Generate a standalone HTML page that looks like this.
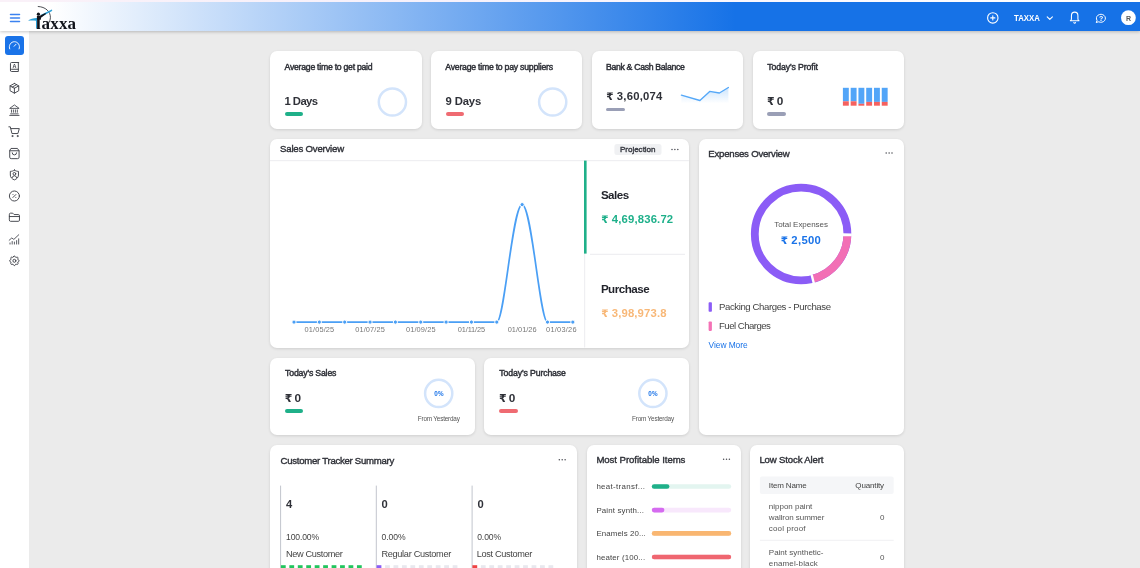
<!DOCTYPE html>
<html lang="en">
<head>
<meta charset="utf-8">
<title>Taxxa Dashboard</title>
<style>
*{box-sizing:border-box;margin:0;padding:0}
html,body{width:1140px;height:568px;overflow:hidden}
body{background:#ebebeb;font-family:"Liberation Sans",sans-serif;color:#2f3138;position:relative}
#topline{position:absolute;left:0;top:0;width:1140px;height:1.500px;background:linear-gradient(90deg,#faf1f8 0%,#f6f1fb 40%,#ffffff 100%);z-index:5}
#header{position:absolute;left:0;top:0;width:1140px;height:31px;background:linear-gradient(90deg,#ffffff 0%,#ffffff 4.500%,#1672e7 64.500%,#1672e7 100%);box-shadow:0 1px 3px rgba(0,0,0,.22);z-index:4}
#sidebar{position:absolute;left:0;top:31px;width:28.5px;height:537px;background:#fff;z-index:3}
#sidebar .act{position:absolute;left:5px;top:5px;width:18.6px;height:18.6px;border-radius:3px;background:#1a73e8}
.ic{position:absolute;left:8px;width:13px;height:13px;fill:none;stroke:#3d3f47;stroke-width:1.7;stroke-linecap:round;stroke-linejoin:round;overflow:visible}
.ic.w{stroke:#fff}
.card{position:absolute;background:#fff;border-radius:7px;box-shadow:0 1px 3px rgba(0,0,0,.12)}
#txt{position:absolute;left:0;top:0;width:1140px;height:568px;z-index:6;will-change:transform}
.t{position:absolute;white-space:nowrap;line-height:1;z-index:6}
.t.b{font-weight:700}
.t.m{font-weight:400;-webkit-text-stroke:.380px currentColor}
.t.n{font-weight:400}
.t.s{font-weight:400;-webkit-text-stroke:.450px currentColor}
.rs{font-family:"DejaVu Sans",sans-serif;font-size:.92em;letter-spacing:0}
.pill{position:absolute;height:3.8px;border-radius:2px;width:18.8px}
.ov{position:absolute;left:0;top:0;width:1140px;height:568px;z-index:5;pointer-events:none;will-change:transform}
#logo{position:absolute;left:0;top:0;z-index:6;will-change:transform}
#logo .lt{display:inline-block;clip-path:inset(0 3.900px 0 3.700px);margin-right:-2.700px}
#logo .w{position:absolute;left:32.800px;top:14.800px;font-family:"Liberation Serif",serif;font-weight:700;font-size:17px;line-height:1;color:#10131a;white-space:nowrap;letter-spacing:.15px}
</style>
</head>
<body>
<div id="header"></div>
<div id="topline"></div>
<div id="logo"><span class="w"><span class="lt">T</span>axxa</span></div>
<svg class="ov" style="z-index:7" width="1140" height="568" viewBox="0 0 1140 568">
<path d="M28 20.700c2.300-1.900 5.800-2.900 9-2.800v10.400h-1v-7.600c-2.900-.500-5.500-.300-8 0z" fill="#2b9fd6"/>
<path d="M38.200 6.500c7.200.300 12.400 5 12.200 11.200-.100 1.700-.500 3.200-1.200 4.600" fill="none" stroke="#22252b" stroke-width=".800" stroke-linecap="round"/>
<path d="M41 14.700l10.800-5.100.500.600-.700 1.100-9.800 5.200z" fill="#2b9fd6"/>
<circle cx="38.400" cy="14.200" r="1.600" fill="#10131a"/>
<path d="M36.900 16.100l2.900-.300 5.600-2.700.600 1-5 3.600-.200 2h-3.900z" fill="#10131a"/>
</svg>
<div id="sidebar"><div class="act"></div></div>

<!-- row 1 -->
<div class="card" style="left:270px;top:51px;width:152px;height:78px"></div>
<div class="card" style="left:431px;top:51px;width:151px;height:78px"></div>
<div class="card" style="left:592px;top:51px;width:151px;height:78px"></div>
<div class="card" style="left:753px;top:51px;width:150.600px;height:78px"></div>
<div class="pill" style="left:284.6px;top:112.3px;background:#1fb089;z-index:6"></div>
<div class="pill" style="left:445.6px;top:112.3px;background:#ef6b72;z-index:6"></div>
<div class="pill" style="left:606.2px;top:107.5px;background:#9a9fb6;z-index:6"></div>
<div class="pill" style="left:766.9px;top:112.3px;background:#9a9fb6;z-index:6"></div>

<!-- sales overview -->
<div class="card" style="left:270px;top:139px;width:418.900px;height:208.800px"></div>
<!-- expenses -->
<div class="card" style="left:699px;top:139px;width:204.5px;height:295.5px"></div>
<!-- today's -->
<div class="card" style="left:270px;top:357.5px;width:204.5px;height:77px"></div>
<div class="card" style="left:484px;top:357.5px;width:205px;height:77px"></div>
<div class="pill" style="left:284.7px;top:408.9px;background:#1fb089;z-index:6"></div>
<div class="pill" style="left:498.9px;top:408.9px;background:#ef6b72;z-index:6"></div>
<!-- bottom row -->
<div class="card" style="left:270px;top:445px;width:307px;height:140px"></div>
<div class="card" style="left:587px;top:445px;width:153.8px;height:140px"></div>
<div class="card" style="left:750px;top:445px;width:153.6px;height:140px"></div>

<svg class="ov" width="1140" height="568" viewBox="0 0 1140 568">
<g stroke="#3b82f0" stroke-width="1.5" stroke-linecap="round"><path d="M10.5 14.6h9M10.5 18h9M10.5 21.4h9"/></g>
<g fill="none" stroke="#fff" stroke-width="1.1" stroke-linecap="round"><circle cx="992.8" cy="17.900" r="5.200"/><path d="M990.700 17.900h4.200M992.800 15.800v4.200"/></g>
<path d="M1047.200 16.800l2.600 2.600 2.600-2.600" fill="none" stroke="#fff" stroke-width="1.100" stroke-linecap="round" stroke-linejoin="round"/>
<g transform="translate(1068.200 11.400) scale(.540)" fill="none" stroke="#fff" stroke-width="2" stroke-linecap="round" stroke-linejoin="round"><path d="M6 8a6 6.700 0 0 1 12 0v6a4 4 0 0 0 2 3.200h-16a4 4 0 0 0 2-3.200z"/><path d="M10.500 20.700a1.600 1.600 0 0 0 3 0"/></g>
<g transform="translate(1094.900 12.300) scale(.5)" fill="none" stroke="#fff" stroke-width="2" stroke-linecap="round" stroke-linejoin="round"><path d="M3 20l1.300-3.900c-2.324-3.437-1.426-7.872 2.100-10.374c3.526-2.501 8.590-2.296 11.845.480c3.255 2.777 3.695 7.266 1.029 10.501c-2.666 3.235-7.615 4.215-11.574 2.293l-4.700 1"/></g>
<text x="1101.200" y="20.900" font-family="Liberation Sans, sans-serif" font-size="7" font-weight="700" fill="#fff" text-anchor="middle">?</text>
<circle cx="1128.400" cy="17.700" r="7.400" fill="#fff"/>
<g transform="translate(7.40 38.70) scale(0.5833)" fill="none" stroke="#fff" stroke-width="1.600" stroke-linecap="round" stroke-linejoin="round"><path d="M3.960 17.500a8.800 8.800 0 1 1 16.080 0"/><path d="M11.500 13l3.200-3.400"/></g>
<g transform="translate(7.65 60.25) scale(0.5625)" fill="none" stroke="#3d3f47" stroke-width="1.659" stroke-linecap="round" stroke-linejoin="round"><path d="M19 4v16h-12a2 2 0 0 1-2-2v-12a2 2 0 0 1 2-2h12z"/><path d="M19 16h-12a2 2 0 0 0-2 2"/></g>
<text x="14.500" y="67.5" font-family="Liberation Sans, sans-serif" font-size="5.400" font-weight="700" fill="#3d3f47" text-anchor="middle">A</text>
<g transform="translate(7.90 81.80) scale(0.5417)" fill="none" stroke="#3d3f47" stroke-width="1.723" stroke-linecap="round" stroke-linejoin="round"><path d="M12 3l8 4.500v9l-8 4.500l-8-4.500v-9l8-4.500"/><path d="M12 12l8-4.500"/><path d="M12 12v9"/><path d="M12 12l-8-4.500"/><path d="M16 5.250l-8 4.500"/></g>
<g transform="translate(7.40 103.20) scale(0.5833)" fill="none" stroke="#3d3f47" stroke-width="1.450" stroke-linecap="round" stroke-linejoin="round"><path d="M4 21h16"/><path d="M5.500 18.300h13"/><path d="M4.500 8.500l7.500-5.500l7.500 5.500z"/><path d="M7 11.500v4"/><path d="M10.300 11.500v4"/><path d="M13.700 11.500v4"/><path d="M17 11.500v4"/></g>
<g transform="translate(7.40 124.50) scale(0.5833)" fill="none" stroke="#3d3f47" stroke-width="1.600" stroke-linecap="round" stroke-linejoin="round"><circle cx="8.500" cy="19.800" r=".900"/><circle cx="17.500" cy="19.800" r=".900"/><path d="M2.500 4h2.500l2.800 11.500h10.200l2.400-8.500h-14.300"/></g>
<g transform="translate(7.40 146.40) scale(0.5833)" fill="none" stroke="#3d3f47" stroke-width="1.600" stroke-linecap="round" stroke-linejoin="round"><path d="M6.800 3.500h10.400l2.800 4v11a2.500 2.500 0 0 1-2.500 2.500h-11a2.500 2.500 0 0 1-2.500-2.500v-11z"/><path d="M4.200 7.500h15.600"/><path d="M8.200 11a3.800 3.600 0 0 0 7.600 0"/></g>
<g transform="translate(7.90 168.50) scale(0.5417)" fill="none" stroke="#3d3f47" stroke-width="1.723" stroke-linecap="round" stroke-linejoin="round"><path d="M12 3c2.300 1.600 4.700 2.300 7.500 2.300v6.700c0 4.300-2.800 7.300-7.500 9c-4.700-1.700-7.500-4.700-7.500-9v-6.700c2.800 0 5.200-.700 7.500-2.300z"/><circle cx="12" cy="9.800" r="2.500"/><path d="M7.800 16.800a4.300 4.300 0 0 1 8.400 0"/></g>
<g transform="translate(7.40 189.00) scale(0.5833)" fill="none" stroke="#3d3f47" stroke-width="1.600" stroke-linecap="round" stroke-linejoin="round"><circle cx="12" cy="12" r="8.600"/><path d="M9.500 14.500l5-5"/><path d="M9.600 9.600v.01"/><path d="M14.400 14.400v.01"/></g>
<g transform="translate(7.65 210.35) scale(0.5625)" fill="none" stroke="#3d3f47" stroke-width="1.659" stroke-linecap="round" stroke-linejoin="round"><path d="M3 7a2 2 0 0 1 2-2h4l2.500 2.500h7.500a2 2 0 0 1 2 2v8a2 2 0 0 1-2 2h-14a2 2 0 0 1-2-2z"/><path d="M3 11h18"/></g>
<g transform="translate(7.40 233.00) scale(0.5833)" fill="none" stroke="#3d3f47" stroke-width="1.450" stroke-linecap="round" stroke-linejoin="round"><path d="M3 12.500l4.500-4l3.500 2.500l8.500-8"/><path d="M4.500 19v-2"/><path d="M8.200 19v-4.500"/><path d="M12 19v-3.500"/><path d="M15.800 19v-6"/><path d="M19.300 19v-9"/></g>
<g transform="translate(8.00 254.40) scale(0.5333)" fill="none" stroke="#3d3f47" stroke-width="1.750" stroke-linecap="round" stroke-linejoin="round"><path d="M10.325 4.317c.426-1.756 2.924-1.756 3.350 0a1.724 1.724 0 0 0 2.573 1.066c1.543-.940 3.310.826 2.370 2.370a1.724 1.724 0 0 0 1.065 2.572c1.756.426 1.756 2.924 0 3.350a1.724 1.724 0 0 0-1.066 2.573c.940 1.543-.826 3.310-2.370 2.370a1.724 1.724 0 0 0-2.572 1.065c-.426 1.756-2.924 1.756-3.350 0a1.724 1.724 0 0 0-2.573-1.066c-1.543.940-3.310-.826-2.370-2.370a1.724 1.724 0 0 0-1.065-2.572c-1.756-.426-1.756-2.924 0-3.350a1.724 1.724 0 0 0 1.066-2.573c-.940-1.543.826-3.310 2.370-2.370c1 .608 2.296.070 2.572-1.065z"/><circle cx="12" cy="12" r="2.800"/></g>
<circle cx="392.4" cy="102" r="13.600" fill="none" stroke="#d3e4fb" stroke-width="2.500"/>
<circle cx="552.7" cy="102" r="13.600" fill="none" stroke="#d3e4fb" stroke-width="2.500"/>
<defs><linearGradient id="spk" x1="0" y1="0" x2="0" y2="1"><stop offset="0" stop-color="#4da3f7" stop-opacity=".28"/><stop offset="1" stop-color="#4da3f7" stop-opacity="0"/></linearGradient></defs>
<path d="M681.4 95.1 L699.9 100.5 L709.7 91.4 L719.4 93 L728.4 87.5 L728.4 103.500 L681.4 103.500z" fill="url(#spk)"/>
<path d="M681.4 95.1 L699.9 100.5 L709.7 91.4 L719.4 93 L728.4 87.5" fill="none" stroke="#55a8f8" stroke-width="1.400" stroke-linejoin="round" stroke-linecap="round"/>
<rect x="842.90" y="87.800" width="5.900" height="13.50" fill="#52a5f8"/>
<rect x="842.90" y="101.3" width="5.900" height="4.40" fill="#f5615f"/>
<rect x="850.67" y="87.800" width="5.900" height="13.50" fill="#52a5f8"/>
<rect x="850.67" y="101.3" width="5.900" height="4.40" fill="#f5615f"/>
<rect x="858.44" y="87.800" width="5.900" height="16.00" fill="#52a5f8"/>
<rect x="858.44" y="103.8" width="5.900" height="1.90" fill="#f5615f"/>
<rect x="866.21" y="87.800" width="5.900" height="14.10" fill="#52a5f8"/>
<rect x="866.21" y="101.9" width="5.900" height="3.80" fill="#f5615f"/>
<rect x="873.98" y="87.800" width="5.900" height="14.10" fill="#52a5f8"/>
<rect x="873.98" y="101.9" width="5.900" height="3.80" fill="#f5615f"/>
<rect x="881.75" y="87.800" width="5.900" height="14.10" fill="#52a5f8"/>
<rect x="881.75" y="101.9" width="5.900" height="3.80" fill="#f5615f"/>
<path d="M270 160.700h418.900" stroke="#ececef" stroke-width="1"/>
<path d="M584.700 160.700v186.800" stroke="#ececef" stroke-width="1"/>
<path d="M590 254.300h95" stroke="#ececef" stroke-width="1"/>
<rect x="584" y="160.600" width="2.600" height="93" fill="#1fb089"/>
<rect x="614.400" y="143.900" width="47.100" height="11" rx="2.500" fill="#f0f1f3"/>
<circle cx="672.0" cy="149.4" r=".750" fill="#4a4b52"/><circle cx="674.9" cy="149.4" r=".750" fill="#4a4b52"/><circle cx="677.8" cy="149.4" r=".750" fill="#4a4b52"/>
<path d="M294.00 322.1L496.80 322.1C504.41 322.1 512.52 204.6 522.15 204.6C531.78 204.6 539.89 322.1 547.50 322.1L572.85 322.1" fill="none" stroke="#4a9ff5" stroke-width="1.700" stroke-linejoin="round"/>
<circle cx="294.00" cy="322.1" r="2.100" fill="#4a9ff5" stroke="#fff" stroke-width="1"/>
<circle cx="319.35" cy="322.1" r="2.100" fill="#4a9ff5" stroke="#fff" stroke-width="1"/>
<circle cx="344.70" cy="322.1" r="2.100" fill="#4a9ff5" stroke="#fff" stroke-width="1"/>
<circle cx="370.05" cy="322.1" r="2.100" fill="#4a9ff5" stroke="#fff" stroke-width="1"/>
<circle cx="395.40" cy="322.1" r="2.100" fill="#4a9ff5" stroke="#fff" stroke-width="1"/>
<circle cx="420.75" cy="322.1" r="2.100" fill="#4a9ff5" stroke="#fff" stroke-width="1"/>
<circle cx="446.10" cy="322.1" r="2.100" fill="#4a9ff5" stroke="#fff" stroke-width="1"/>
<circle cx="471.45" cy="322.1" r="2.100" fill="#4a9ff5" stroke="#fff" stroke-width="1"/>
<circle cx="496.80" cy="322.1" r="2.100" fill="#4a9ff5" stroke="#fff" stroke-width="1"/>
<circle cx="522.15" cy="204.6" r="2.100" fill="#4a9ff5" stroke="#fff" stroke-width="1"/>
<circle cx="547.50" cy="322.1" r="2.100" fill="#4a9ff5" stroke="#fff" stroke-width="1"/>
<circle cx="572.85" cy="322.1" r="2.100" fill="#4a9ff5" stroke="#fff" stroke-width="1"/>
<circle cx="886.2" cy="153" r=".750" fill="#4a4b52"/><circle cx="889.1" cy="153" r=".750" fill="#4a4b52"/><circle cx="892.0" cy="153" r=".750" fill="#4a4b52"/>
<circle cx="801.1" cy="234" r="46.3" fill="none" stroke="#8b5cf6" stroke-width="7.800"/>
<circle cx="801.1" cy="234" r="46.3" fill="none" stroke="#f26fb5" stroke-width="7.800" stroke-dasharray="60.61 230.30"/>
<path d="M842.89 234.73L851.89 234.89" stroke="#fff" stroke-width="2.8"/>
<path d="M811.57 274.47L813.82 283.18" stroke="#fff" stroke-width="2.4"/>
<rect x="708.600" y="302.300" width="3.300" height="9.500" rx=".800" fill="#8b5cf6"/>
<rect x="708.600" y="321.400" width="3.300" height="9.500" rx=".800" fill="#f472b6"/>
<circle cx="438.7" cy="393.400" r="13.600" fill="none" stroke="#d3e4fb" stroke-width="2.500"/>
<circle cx="652.9" cy="393.400" r="13.600" fill="none" stroke="#d3e4fb" stroke-width="2.500"/>
<circle cx="559.3" cy="459.8" r=".750" fill="#4a4b52"/><circle cx="562.2" cy="459.8" r=".750" fill="#4a4b52"/><circle cx="565.1" cy="459.8" r=".750" fill="#4a4b52"/>
<path d="M280.6 485.600V568" stroke="#c2c5cd" stroke-width="1"/>
<rect x="280.90" y="565.200" width="4.800" height="3" fill="#22c55e"/>
<rect x="289.35" y="565.200" width="4.800" height="3" fill="#22c55e"/>
<rect x="297.80" y="565.200" width="4.800" height="3" fill="#22c55e"/>
<rect x="306.25" y="565.200" width="4.800" height="3" fill="#22c55e"/>
<rect x="314.70" y="565.200" width="4.800" height="3" fill="#22c55e"/>
<rect x="323.15" y="565.200" width="4.800" height="3" fill="#22c55e"/>
<rect x="331.60" y="565.200" width="4.800" height="3" fill="#22c55e"/>
<rect x="340.05" y="565.200" width="4.800" height="3" fill="#22c55e"/>
<rect x="348.50" y="565.200" width="4.800" height="3" fill="#22c55e"/>
<rect x="356.95" y="565.200" width="4.800" height="3" fill="#22c55e"/>
<path d="M376.3 485.600V568" stroke="#c2c5cd" stroke-width="1"/>
<rect x="376.60" y="565.200" width="4.800" height="3" fill="#8b5cf6"/>
<rect x="385.05" y="565.200" width="4.800" height="3" fill="#e8e8ee"/>
<rect x="393.50" y="565.200" width="4.800" height="3" fill="#e8e8ee"/>
<rect x="401.95" y="565.200" width="4.800" height="3" fill="#e8e8ee"/>
<rect x="410.40" y="565.200" width="4.800" height="3" fill="#e8e8ee"/>
<rect x="418.85" y="565.200" width="4.800" height="3" fill="#e8e8ee"/>
<rect x="427.30" y="565.200" width="4.800" height="3" fill="#e8e8ee"/>
<rect x="435.75" y="565.200" width="4.800" height="3" fill="#e8e8ee"/>
<rect x="444.20" y="565.200" width="4.800" height="3" fill="#e8e8ee"/>
<rect x="452.65" y="565.200" width="4.800" height="3" fill="#e8e8ee"/>
<path d="M472.1 485.600V568" stroke="#c2c5cd" stroke-width="1"/>
<rect x="472.40" y="565.200" width="4.800" height="3" fill="#ef4444"/>
<rect x="480.85" y="565.200" width="4.800" height="3" fill="#e8e8ee"/>
<rect x="489.30" y="565.200" width="4.800" height="3" fill="#e8e8ee"/>
<rect x="497.75" y="565.200" width="4.800" height="3" fill="#e8e8ee"/>
<rect x="506.20" y="565.200" width="4.800" height="3" fill="#e8e8ee"/>
<rect x="514.65" y="565.200" width="4.800" height="3" fill="#e8e8ee"/>
<rect x="523.10" y="565.200" width="4.800" height="3" fill="#e8e8ee"/>
<rect x="531.55" y="565.200" width="4.800" height="3" fill="#e8e8ee"/>
<rect x="540.00" y="565.200" width="4.800" height="3" fill="#e8e8ee"/>
<rect x="548.45" y="565.200" width="4.800" height="3" fill="#e8e8ee"/>
<circle cx="723.6" cy="459.3" r=".750" fill="#4a4b52"/><circle cx="726.5" cy="459.3" r=".750" fill="#4a4b52"/><circle cx="729.4" cy="459.3" r=".750" fill="#4a4b52"/>
<rect x="651.800" y="484.2" width="79.400" height="4.600" rx="2.300" fill="#e3f5f0"/>
<rect x="651.800" y="484.2" width="17.6" height="4.600" rx="2.300" fill="#1fb089"/>
<rect x="651.800" y="507.8" width="79.400" height="4.600" rx="2.300" fill="#f8e8fc"/>
<rect x="651.800" y="507.8" width="12.6" height="4.600" rx="2.300" fill="#d56bf0"/>
<rect x="651.800" y="531.1" width="79.400" height="4.600" rx="2.300" fill="#fdeedd"/>
<rect x="651.800" y="531.1" width="79.4" height="4.600" rx="2.300" fill="#f9b671"/>
<rect x="651.800" y="554.7" width="79.400" height="4.600" rx="2.300" fill="#fde3e5"/>
<rect x="651.800" y="554.7" width="79.4" height="4.600" rx="2.300" fill="#ef6670"/>
<rect x="759.900" y="476.400" width="133.800" height="17.700" rx="2" fill="#f5f6f8"/>
<path d="M759.900 540.300h133.800" stroke="#f0f0f3" stroke-width="1"/>
</svg>
<div id="txt">
<span class="t b" style="left:1014.10px;top:12.90px;font-size:9.8px;color:#fff;transform-origin:0 0;transform:scaleX(0.794)">TAXXA</span>
<span class="t b" style="left:1125.97px;top:15.30px;font-size:7.0px;color:#5a5a5a">R</span>
<span class="t s" style="left:284.60px;top:62.95px;font-size:8.7px;color:#2f3138;letter-spacing:-0.262px">Average time to get paid</span>
<span class="t b" style="left:284.60px;top:95.65px;font-size:11.3px;color:#2f3138;letter-spacing:-0.588px">1 Days</span>
<span class="t s" style="left:445.30px;top:62.95px;font-size:8.7px;color:#2f3138;letter-spacing:-0.236px">Average time to pay suppliers</span>
<span class="t b" style="left:445.60px;top:95.65px;font-size:11.3px;color:#2f3138;letter-spacing:-0.147px">9 Days</span>
<span class="t s" style="left:605.90px;top:62.95px;font-size:8.7px;color:#2f3138;letter-spacing:-0.306px">Bank &amp; Cash Balance</span>
<span class="t b" style="left:606.20px;top:90.65px;font-size:11.3px;color:#2f3138;letter-spacing:0.227px"><span class="rs">₹</span> 3,60,074</span>
<span class="t s" style="left:767.20px;top:62.95px;font-size:8.7px;color:#2f3138;letter-spacing:-0.090px">Today's Profit</span>
<span class="t b" style="left:766.90px;top:96.40px;font-size:11.8px;color:#2f3138;letter-spacing:-1.045px"><span class="rs">₹</span> 0</span>
<span class="t m" style="left:280.10px;top:144.00px;font-size:9.6px;color:#2f3138;letter-spacing:-0.204px">Sales Overview</span>
<span class="t m" style="left:619.90px;top:145.75px;font-size:8.1px;color:#3a3c44;letter-spacing:-0.033px">Projection</span>
<span class="t b" style="left:600.90px;top:188.50px;font-size:11.6px;color:#22242c;letter-spacing:-0.528px">Sales</span>
<span class="t b" style="left:601.30px;top:213.65px;font-size:11.3px;color:#1eb08a;letter-spacing:0.161px"><span class="rs">₹</span> 4,69,836.72</span>
<span class="t b" style="left:600.90px;top:282.50px;font-size:11.6px;color:#22242c;letter-spacing:-0.500px">Purchase</span>
<span class="t b" style="left:601.30px;top:307.65px;font-size:11.3px;color:#f8b878;letter-spacing:0.138px"><span class="rs">₹</span> 3,98,973.8</span>
<span class="t n" style="left:304.55px;top:326.10px;font-size:7.4px;color:#777;letter-spacing:0.117px">01/05/25</span>
<span class="t n" style="left:355.25px;top:326.10px;font-size:7.4px;color:#777;letter-spacing:0.117px">01/07/25</span>
<span class="t n" style="left:405.95px;top:326.10px;font-size:7.4px;color:#777;letter-spacing:0.117px">01/09/25</span>
<span class="t n" style="left:457.70px;top:326.10px;font-size:7.4px;color:#777;letter-spacing:-0.105px">01/11/25</span>
<span class="t n" style="left:507.65px;top:326.10px;font-size:7.4px;color:#777;letter-spacing:0.031px">01/01/26</span>
<span class="t n" style="left:546.05px;top:326.10px;font-size:7.4px;color:#777;letter-spacing:0.246px">01/03/26</span>
<span class="t m" style="left:708.30px;top:149.00px;font-size:9.6px;color:#2f3138;letter-spacing:-0.218px">Expenses Overview</span>
<span class="t n" style="left:774.20px;top:220.80px;font-size:8.0px;color:#555;letter-spacing:-0.036px">Total Expenses</span>
<span class="t b" style="left:780.70px;top:234.65px;font-size:11.3px;color:#1a73e8;letter-spacing:0.307px"><span class="rs">₹</span> 2,500</span>
<span class="t n" style="left:719.00px;top:302.00px;font-size:9.6px;color:#444;letter-spacing:-0.405px">Packing Charges - Purchase</span>
<span class="t n" style="left:719.00px;top:321.00px;font-size:9.6px;color:#444;letter-spacing:-0.518px">Fuel Charges</span>
<span class="t n" style="left:708.60px;top:341.10px;font-size:8.4px;color:#1a73e8;letter-spacing:-0.053px">View More</span>
<span class="t s" style="left:285.10px;top:368.95px;font-size:8.7px;color:#2f3138;letter-spacing:-0.170px">Today's Sales</span>
<span class="t b" style="left:284.70px;top:393.40px;font-size:11.8px;color:#2f3138;letter-spacing:-0.995px"><span class="rs">₹</span> 0</span>
<span class="t b" style="left:434.25px;top:390.65px;font-size:6.3px;color:#1a73e8;letter-spacing:0.191px">0%</span>
<span class="t n" style="left:417.80px;top:415.60px;font-size:6.4px;color:#555;letter-spacing:-0.205px">From Yesterday</span>
<span class="t s" style="left:499.30px;top:368.95px;font-size:8.7px;color:#2f3138;letter-spacing:-0.114px">Today's Purchase</span>
<span class="t b" style="left:498.90px;top:393.40px;font-size:11.8px;color:#2f3138;letter-spacing:-0.995px"><span class="rs">₹</span> 0</span>
<span class="t b" style="left:648.25px;top:390.65px;font-size:6.3px;color:#1a73e8;letter-spacing:0.191px">0%</span>
<span class="t n" style="left:632.10px;top:415.60px;font-size:6.4px;color:#555;letter-spacing:-0.213px">From Yesterday</span>
<span class="t m" style="left:280.60px;top:456.00px;font-size:9.6px;color:#2f3138;letter-spacing:-0.272px">Customer Tracker Summary</span>
<span class="t b" style="left:286.10px;top:498.70px;font-size:11.2px;color:#2f3138">4</span>
<span class="t n" style="left:286.10px;top:533.00px;font-size:8.6px;color:#444;letter-spacing:-0.156px">100.00%</span>
<span class="t n" style="left:286.10px;top:549.70px;font-size:9.2px;color:#444;letter-spacing:-0.361px">New Customer</span>
<span class="t b" style="left:381.60px;top:498.70px;font-size:11.2px;color:#2f3138">0</span>
<span class="t n" style="left:381.60px;top:533.00px;font-size:8.6px;color:#444;letter-spacing:-0.094px">0.00%</span>
<span class="t n" style="left:381.40px;top:549.70px;font-size:9.2px;color:#444;letter-spacing:-0.311px">Regular Customer</span>
<span class="t b" style="left:477.40px;top:498.70px;font-size:11.2px;color:#2f3138">0</span>
<span class="t n" style="left:477.20px;top:533.00px;font-size:8.6px;color:#444;letter-spacing:-0.094px">0.00%</span>
<span class="t n" style="left:476.70px;top:549.70px;font-size:9.2px;color:#444;letter-spacing:-0.337px">Lost Customer</span>
<span class="t m" style="left:596.40px;top:455.00px;font-size:9.6px;color:#2f3138;letter-spacing:-0.055px">Most Profitable Items</span>
<span class="t n" style="left:596.40px;top:482.85px;font-size:7.9px;color:#444;letter-spacing:0.323px">heat-transf...</span>
<span class="t n" style="left:596.40px;top:506.85px;font-size:7.9px;color:#444;letter-spacing:0.152px">Paint synth...</span>
<span class="t n" style="left:596.40px;top:529.85px;font-size:7.9px;color:#444;letter-spacing:0.096px">Enamels 20...</span>
<span class="t n" style="left:596.40px;top:553.85px;font-size:7.9px;color:#444;letter-spacing:0.136px">heater (100...</span>
<span class="t m" style="left:759.40px;top:455.00px;font-size:9.6px;color:#2f3138;letter-spacing:-0.152px">Low Stock Alert</span>
<span class="t n" style="left:768.80px;top:481.80px;font-size:8.0px;color:#444;letter-spacing:-0.141px">Item Name</span>
<span class="t n" style="left:855.30px;top:481.80px;font-size:8.0px;color:#444;letter-spacing:-0.142px">Quantity</span>
<span class="t n" style="left:768.80px;top:502.80px;font-size:8.0px;color:#555;letter-spacing:-0.009px">nippon paint</span>
<span class="t n" style="left:768.80px;top:513.80px;font-size:8.0px;color:#555;letter-spacing:-0.067px">wallron summer</span>
<span class="t n" style="left:768.80px;top:524.80px;font-size:8.0px;color:#555;letter-spacing:0.184px">cool proof</span>
<span class="t n" style="left:880.00px;top:513.80px;font-size:8.0px;color:#555">0</span>
<span class="t n" style="left:768.80px;top:548.80px;font-size:8.0px;color:#555">Paint synthetic-</span>
<span class="t n" style="left:768.80px;top:559.80px;font-size:8.0px;color:#555;letter-spacing:0.129px">enamel-black</span>
<span class="t n" style="left:880.00px;top:553.80px;font-size:8.0px;color:#555">0</span>
</div>
</body>
</html>
